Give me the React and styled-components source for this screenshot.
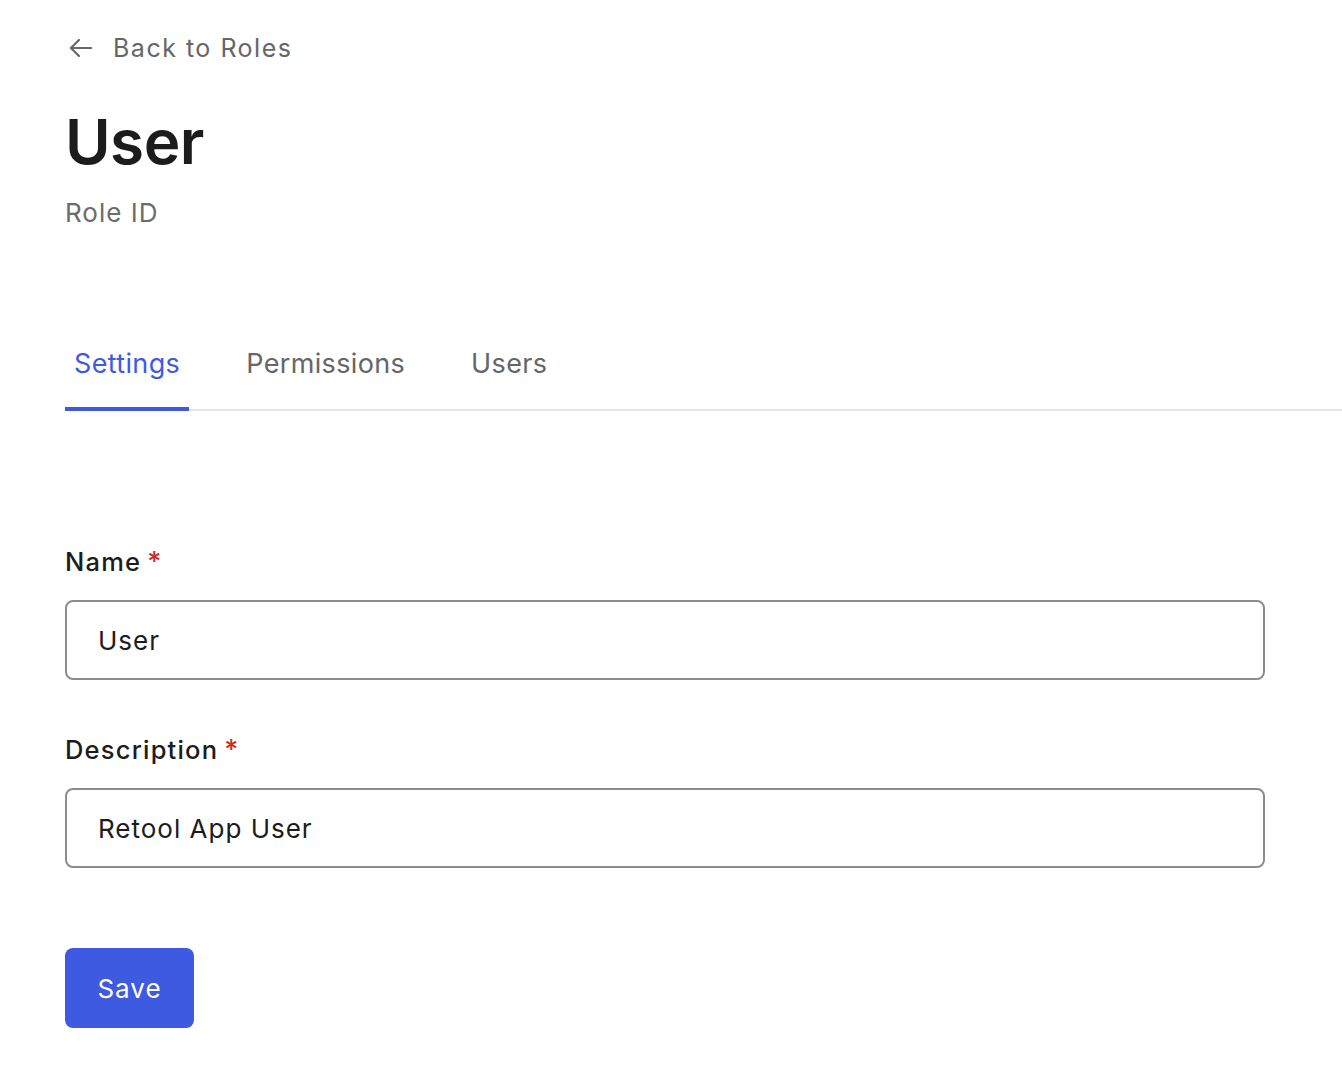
import React from "react";
import styled, { createGlobalStyle } from "styled-components";

const Global = createGlobalStyle`
  html, body { margin: 0; padding: 0; background: #fff; }
  body { font-family: Inter, "Noto Sans", sans-serif; -webkit-font-smoothing: antialiased; }
  * { box-sizing: border-box; }
`;

const Page = styled.div`
  padding: 30px 0 0 65px;
  display: flex;
  flex-direction: column;
`;

const BackLink = styled.a`
  display: flex;
  align-items: center;
  gap: 20px;
  color: #666;
  font-size: 25px;
  letter-spacing: 1.5px;
  text-decoration: none;
  height: 36px;
  padding-left: 4px;
`;

const Title = styled.h1`
  margin: 38px 0 0;
  font-size: 62px;
  font-weight: 600;
  line-height: 76px;
  color: #1c1c1c;
  letter-spacing: -0.5px;
`;

const Subtitle = styled.div`
  margin-top: 17px;
  font-size: 26px;
  letter-spacing: 1px;
  color: #6b6b6b;
  line-height: 32px;
`;

const Tabs = styled.div`
  margin-top: 118px;
  display: flex;
  border-bottom: 2px solid #e6e6e6;
`;

const Tab = styled.button`
  background: none;
  border: none;
  font-family: inherit;
  font-size: 27px;
  letter-spacing: 0.35px;
  padding: 0 9px 26px;
  margin-right: 48px;
  margin-bottom: -2px;
  color: ${p => (p.$active ? "#3d5ae0" : "#666")};
  border-bottom: 4px solid ${p => (p.$active ? "#3d5ae0" : "transparent")};
  line-height: 34px;
  cursor: pointer;
`;

const Form = styled.form`
  margin-top: 135px;
  width: 1200px;
  display: flex;
  flex-direction: column;
`;

const Field = styled.div`
  display: flex;
  flex-direction: column;
  margin-bottom: 54px;
`;

const Label = styled.label`
  font-size: 25.5px;
  font-weight: 500;
  letter-spacing: 1.2px;
  color: #1c1c1c;
  line-height: 32px;
  margin-bottom: 22px;
`;

const Required = styled.span`
  color: #d4281e;
  margin-left: 6px;
  font-size: 27px;
`;

const Input = styled.input`
  height: 80px;
  border: 2px solid #8c8c8c;
  border-radius: 8px;
  padding: 0 31px;
  font-family: inherit;
  font-size: 26px;
  letter-spacing: 1px;
  color: #1c1c1c;
  outline: none;
`;

const SaveButton = styled.button`
  margin-top: 26px;
  width: 129px;
  height: 80px;
  border: none;
  border-radius: 8px;
  background: #3d5ae0;
  color: #fff;
  font-family: inherit;
  font-size: 26px;
  letter-spacing: 1px;
  cursor: pointer;
`;

export default function App() {
  return (
    <>
      <Global />
      <Page>
        <BackLink href="#">
          <svg width="24" height="20" viewBox="0 0 24 20" fill="none" stroke="#666" strokeWidth="2.2" strokeLinecap="round" strokeLinejoin="round">
            <path d="M22 10H2" />
            <path d="M10 2L2 10L10 18" />
          </svg>
          Back to Roles
        </BackLink>
        <Title>User</Title>
        <Subtitle>Role ID</Subtitle>
        <Tabs>
          <Tab $active>Settings</Tab>
          <Tab>Permissions</Tab>
          <Tab>Users</Tab>
        </Tabs>
        <Form onSubmit={e => e.preventDefault()}>
          <Field>
            <Label>Name<Required>*</Required></Label>
            <Input defaultValue="User" />
          </Field>
          <Field>
            <Label>Description<Required>*</Required></Label>
            <Input defaultValue="Retool App User" />
          </Field>
          <div>
            <SaveButton type="submit">Save</SaveButton>
          </div>
        </Form>
      </Page>
    </>
  );
}
